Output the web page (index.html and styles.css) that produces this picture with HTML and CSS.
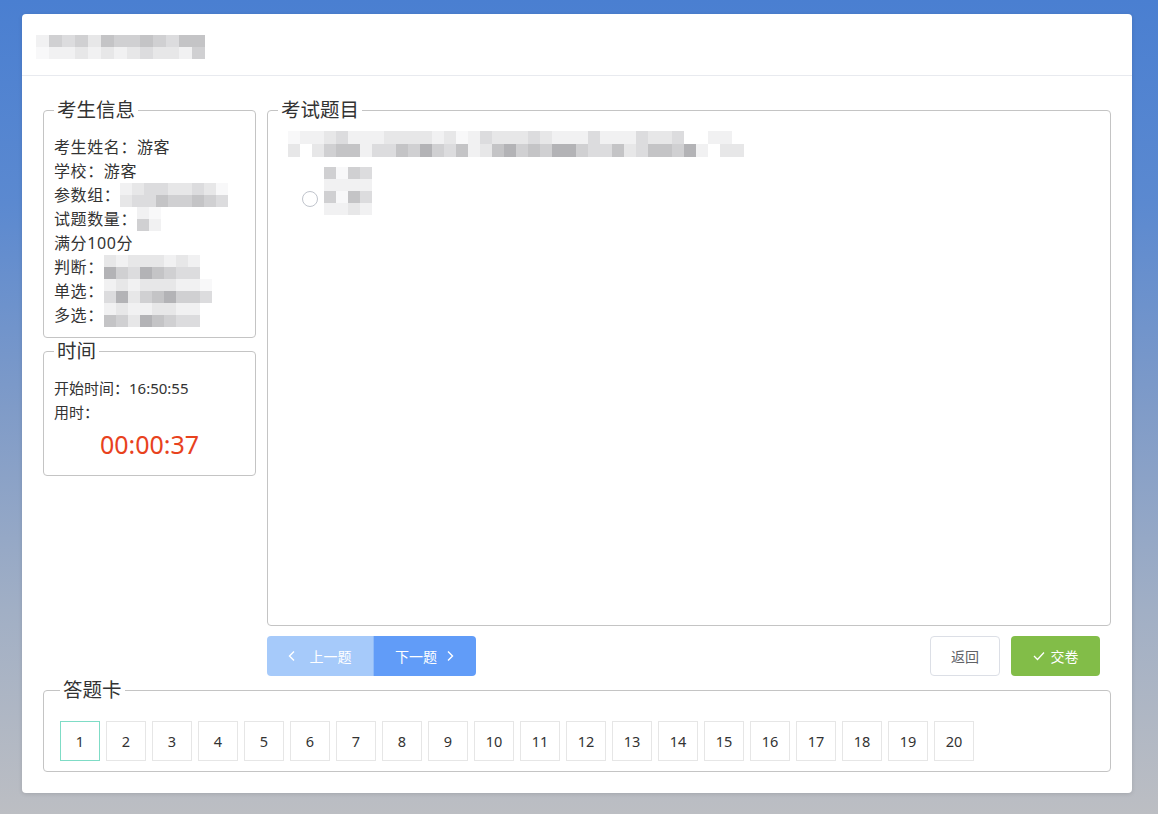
FILE: index.html
```html
<!DOCTYPE html>
<html lang="zh-CN">
<head>
<meta charset="utf-8">
<title>考试</title>
<link rel="stylesheet" href="styles.css">
</head>
<body>
<div class="page">
  <div class="card">
    <div class="card-header">
      <div class="mosaic title-mz">
        <div class="mr"><span class="a"></span><span class="d"></span><span class="c"></span><span class="d"></span><span class="b"></span><span class="e"></span><span class="d"></span><span class="d"></span><span class="e"></span><span class="d"></span><span class="c"></span><span class="e"></span><span class="e"></span></div>
        <div class="mr"><span class="w"></span><span class="a"></span><span class="a"></span><span class="b"></span><span class="a"></span><span class="b"></span><span class="a"></span><span class="b"></span><span class="c"></span><span class="b"></span><span class="b"></span><span class="a"></span><span class="d"></span></div>
      </div>
    </div>
    <div class="card-body">
      <div class="layout">
        <div class="left-col">
          <fieldset class="box info-box">
            <legend>考生信息</legend>
            <div class="line">考生姓名：游客</div>
            <div class="line">学校：游客</div>
            <div class="line">参数组：<div class="mosaic">
              <div class="mr"><span class="a"></span><span class="b"></span><span class="c"></span><span class="c"></span><span class="b"></span><span class="b"></span><span class="c"></span><span class="b"></span><span class="w"></span></div>
              <div class="mr"><span class="b"></span><span class="c"></span><span class="c"></span><span class="e"></span><span class="d"></span><span class="d"></span><span class="e"></span><span class="d"></span><span class="c"></span></div>
            </div></div>
            <div class="line">试题数量：<div class="mosaic">
              <div class="mr"><span class="a"></span><span class="w"></span></div>
              <div class="mr"><span class="d"></span><span class="a"></span></div>
            </div></div>
            <div class="line">满分100分</div>
            <div class="line">判断：<div class="mosaic">
              <div class="mr"><span class="b"></span><span class="a"></span><span class="b"></span><span class="b"></span><span class="b"></span><span class="a"></span><span class="b"></span><span class="a"></span></div>
              <div class="mr"><span class="f"></span><span class="d"></span><span class="c"></span><span class="f"></span><span class="e"></span><span class="d"></span><span class="c"></span><span class="c"></span></div>
            </div></div>
            <div class="line">单选：<div class="mosaic">
              <div class="mr"><span class="a"></span><span class="b"></span><span class="a"></span><span class="b"></span><span class="b"></span><span class="b"></span><span class="a"></span><span class="a"></span><span class="w"></span></div>
              <div class="mr"><span class="c"></span><span class="f"></span><span class="b"></span><span class="d"></span><span class="e"></span><span class="f"></span><span class="d"></span><span class="d"></span><span class="c"></span></div>
            </div></div>
            <div class="line">多选：<div class="mosaic">
              <div class="mr"><span class="a"></span><span class="b"></span><span class="a"></span><span class="a"></span><span class="b"></span><span class="b"></span><span class="a"></span><span class="a"></span></div>
              <div class="mr"><span class="e"></span><span class="d"></span><span class="b"></span><span class="f"></span><span class="e"></span><span class="d"></span><span class="c"></span><span class="c"></span></div>
            </div></div>
          </fieldset>
          <fieldset class="box time-box">
            <legend>时间</legend>
            <div class="line small">开始时间：16:50:55</div>
            <div class="line small">用时：</div>
            <div class="timer">00:00:37</div>
          </fieldset>
        </div>
        <div class="right-col">
          <fieldset class="box question-box">
            <legend>考试题目</legend>
            <div class="mosaic q-mz">
              <div class="mr"><span class="w"></span><span class="a"></span><span class="a"></span><span class="b"></span><span class="c"></span><span class="a"></span><span class="a"></span><span class="a"></span><span class="b"></span><span class="b"></span><span class="b"></span><span class="b"></span><span class="a"></span><span class="b"></span><span class="w"></span><span class="a"></span><span class="c"></span><span class="b"></span><span class="b"></span><span class="b"></span><span class="c"></span><span class="b"></span><span class="a"></span><span class="a"></span><span class="a"></span><span class="c"></span><span class="a"></span><span class="a"></span><span class="a"></span><span class="c"></span><span class="b"></span><span class="b"></span><span class="c"></span><span class="x"></span><span class="x"></span><span class="a"></span><span class="a"></span></div>
              <div class="mr"><span class="b"></span><span class="x"></span><span class="b"></span><span class="d"></span><span class="e"></span><span class="e"></span><span class="a"></span><span class="c"></span><span class="c"></span><span class="e"></span><span class="d"></span><span class="f"></span><span class="d"></span><span class="c"></span><span class="e"></span><span class="a"></span><span class="b"></span><span class="e"></span><span class="f"></span><span class="d"></span><span class="e"></span><span class="d"></span><span class="f"></span><span class="f"></span><span class="d"></span><span class="c"></span><span class="c"></span><span class="e"></span><span class="b"></span><span class="c"></span><span class="e"></span><span class="e"></span><span class="d"></span><span class="f"></span><span class="a"></span><span class="x"></span><span class="b"></span><span class="b"></span></div>
            </div>
            <div class="options">
              <div class="radio-col"><span class="radio"></span></div>
              <div class="mosaic">
                <div class="mr"><span class="d"></span><span class="w"></span><span class="d"></span><span class="c"></span></div>
                <div class="mr"><span class="a"></span><span class="a"></span><span class="a"></span><span class="a"></span></div>
                <div class="mr"><span class="d"></span><span class="w"></span><span class="e"></span><span class="c"></span></div>
                <div class="mr"><span class="a"></span><span class="a"></span><span class="b"></span><span class="a"></span></div>
              </div>
            </div>
          </fieldset>
          <div class="actions">
            <div class="btn-group">
              <button class="btn btn-prev"><svg width="10" height="12" viewBox="0 0 10 12"><polyline points="7,1.5 2.5,6 7,10.5" fill="none" stroke="#fff" stroke-width="1.4"/></svg><span>上一题</span></button>
              <button class="btn btn-next"><span>下一题</span><svg width="10" height="12" viewBox="0 0 10 12"><polyline points="3,1.5 7.5,6 3,10.5" fill="none" stroke="#fff" stroke-width="1.4"/></svg></button>
            </div>
            <div class="right-btns">
              <button class="btn btn-back">返回</button>
              <button class="btn btn-submit"><svg width="12" height="10" viewBox="0 0 12 10"><polyline points="1,5 4.5,8.5 11,1.5" fill="none" stroke="#fff" stroke-width="1.3"/></svg><span>交卷</span></button>
            </div>
          </div>
        </div>
      </div>
      <fieldset class="box answer-box">
        <legend>答题卡</legend>
        <div class="nums">
          <span class="num current">1</span><span class="num">2</span><span class="num">3</span><span class="num">4</span><span class="num">5</span><span class="num">6</span><span class="num">7</span><span class="num">8</span><span class="num">9</span><span class="num">10</span><span class="num">11</span><span class="num">12</span><span class="num">13</span><span class="num">14</span><span class="num">15</span><span class="num">16</span><span class="num">17</span><span class="num">18</span><span class="num">19</span><span class="num">20</span>
        </div>
      </fieldset>
    </div>
  </div>
</div>
</body>
</html>
```

FILE: styles.css
```css
* { box-sizing: border-box; }
html, body { margin: 0; padding: 0; }
body {
  width: 1158px;
  height: 814px;
  overflow: hidden;
  font-family: "Noto Sans", "Noto Sans CJK SC", sans-serif;
  color: #333;
  background: linear-gradient(180deg, #4a7fd1 0%, #5b89d0 25%, #7f9bc8 50%, #a1afc5 75%, #bcbec3 100%);
}
.page {
  padding: 14px 26px 0 22px;
}
.card {
  width: 1110px;
  height: 779px;
  background: #fff;
  border-radius: 4px;
  box-shadow: 0 1px 4px rgba(0,0,0,0.12);
  display: flex;
  flex-direction: column;
}
.card-header {
  height: 62px;
  border-bottom: 1px solid #e8eaef;
  padding: 21px 0 0 14px;
}
.mosaic { display: flex; flex-direction: column; }
.mr { display: flex; }
.mr span { width: 12px; height: 12px; display: block; }
.title-mz .mr span { width: 13px; }
.q-mz .mr span { height: 13px; }
.mr .w { background: #f8f8f9; }
.mr .x { background: transparent; }
.mr .a { background: #f1f1f2; }
.mr .b { background: #e7e7e8; }
.mr .c { background: #dcdcde; }
.mr .d { background: #d0d0d2; }
.mr .e { background: #c4c4c6; }
.mr .f { background: #b3b3b6; }

.card-body {
  padding: 22px 21px 0 21px;
}
.layout {
  display: grid;
  grid-template-columns: 213px 844px;
  column-gap: 11px;
}
.box {
  margin: 0;
  border: 1px solid #c4c4c4;
  border-radius: 4px;
  padding: 0 10px 10px;
  min-width: 0;
}
.box legend {
  padding: 0 3px;
  font-size: 19.5px;
  line-height: 24px;
  color: #333;
}
.info-box { padding-top: 13px; }
.line {
  font-size: 16px;
  letter-spacing: 0.6px;
  line-height: 24px;
  height: 24px;
  display: flex;
  align-items: center;
  white-space: nowrap;
}
.line .mosaic { margin-left: 0; }
.line.small { font-size: 15px; letter-spacing: 0; }
.time-box {
  margin-top: 1px;
  padding-top: 13px;
  padding-bottom: 12px;
}
.timer {
  margin-top: 3px;
  margin-bottom: 2px;
  text-align: center;
  font-size: 25px;
  line-height: 34px;
  color: #e8421d;
}
.question-box {
  height: 528px;
  padding: 9px 10px 10px;
}
.q-mz { margin-left: 10px; }
.options {
  display: flex;
  margin-top: 10px;
  padding-left: 24px;
}
.radio-col {
  width: 22px;
  display: flex;
  flex-direction: column;
  padding-top: 24px;
}
.radio {
  width: 16px;
  height: 16px;
  border: 1px solid #c0c4cc;
  border-radius: 50%;
  display: block;
}
.actions {
  margin-top: 10px;
  display: flex;
  justify-content: space-between;
  height: 40px;
}
.btn-group { display: flex; }
.btn {
  font-family: "Noto Sans CJK SC", "Noto Sans", sans-serif;
  font-size: 14px;
  height: 40px;
  border: 0;
  color: #fff;
  display: flex;
  align-items: center;
  justify-content: center;
  gap: 8px;
  padding: 0;
  cursor: pointer;
}
.btn-prev {
  width: 106px;
  background: #a6cafa;
  border-radius: 4px 0 0 4px;
  gap: 13px;
  padding-right: 2px;
}
.btn-next {
  width: 103px;
  background: #619cf8;
  border-radius: 0 4px 4px 0;
  border-left: 1px solid #8ebaf9;
  gap: 8px;
}
.right-btns {
  display: flex;
  gap: 11px;
  margin-right: 11px;
}
.btn-back {
  width: 70px;
  background: #fff;
  border: 1px solid #dcdfe6;
  border-radius: 4px;
  color: #606266;
}
.btn-submit {
  width: 89px;
  background: #82bd48;
  border-radius: 4px;
  gap: 6px;
}
.answer-box {
  margin-top: 2px;
  padding: 19px 16px 10px;
}
.nums {
  display: flex;
  gap: 6px;
}
.num {
  width: 40px;
  height: 40px;
  border: 1px solid #e6e6e6;
  display: flex;
  align-items: center;
  justify-content: center;
  font-size: 14.5px;
  color: #333;
}
.num.current { border-color: #7fdcc6; }
```
